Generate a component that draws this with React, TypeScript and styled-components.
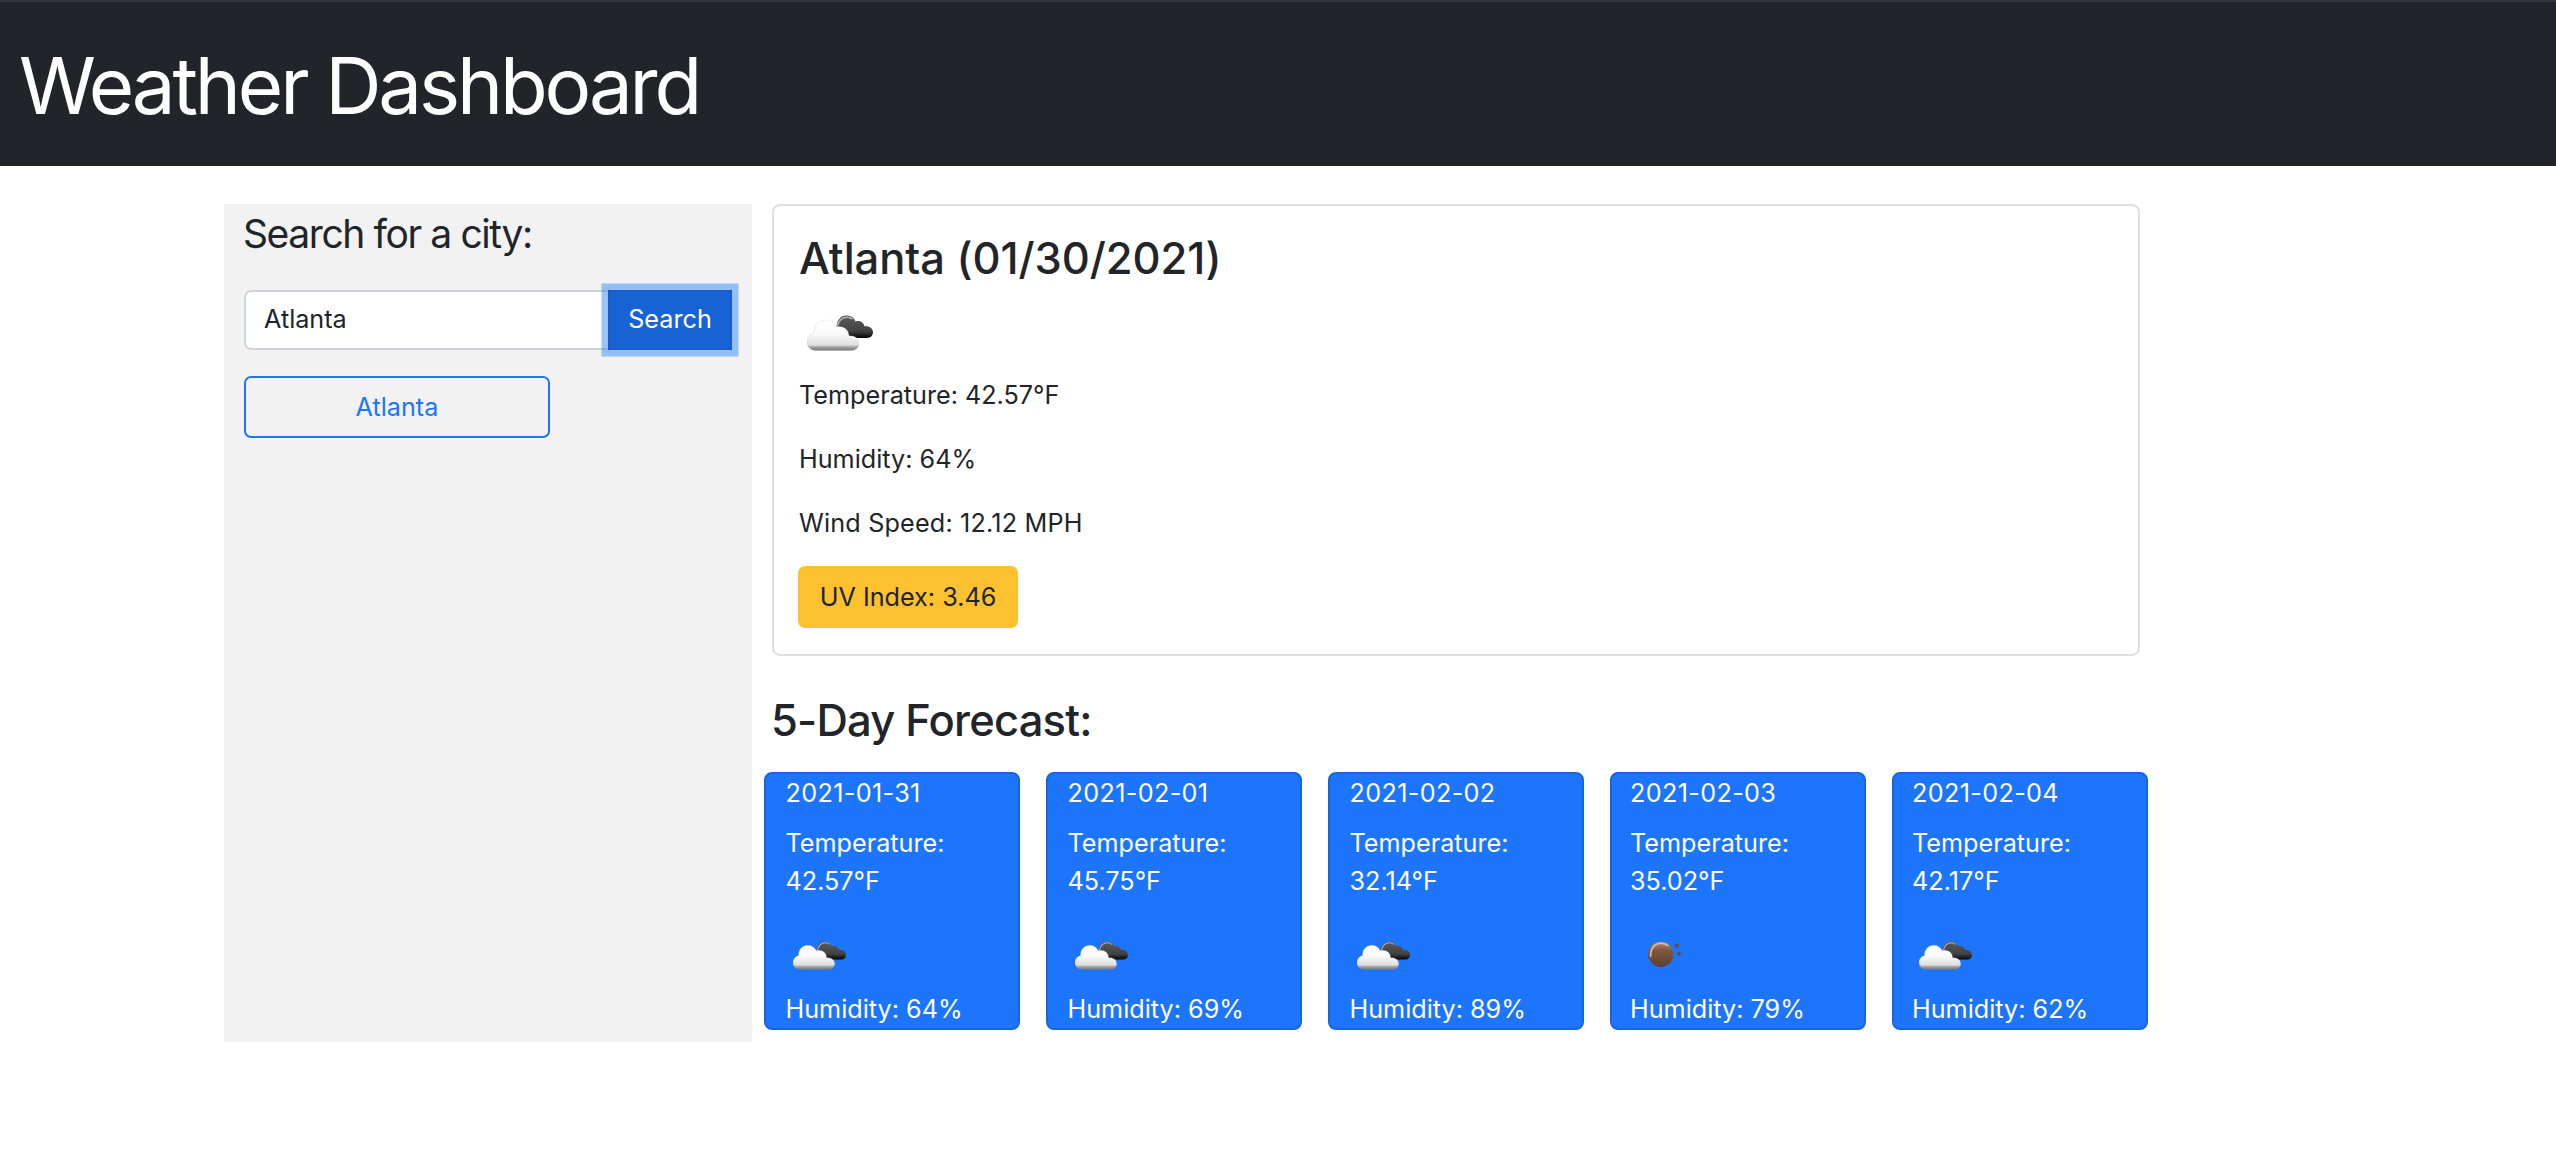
import React from "react";
import styled, { createGlobalStyle } from "styled-components";

const GlobalStyle = createGlobalStyle`
  *, *::before, *::after { box-sizing: border-box; }
  body {
    margin: 0;
    background: #fff;
    color: #212529;
    font-family: Inter, "Liberation Sans", sans-serif;
    font-size: 25.2px;
    line-height: 38px;
  }
`;

const Header = styled.header`
  height: 166px;
  padding: 36px 19px 0;
  background: #212429;
  border-top: 2px solid #33363c;
`;

const PageTitle = styled.h1`
  margin: 0;
  color: #fff;
  font-size: 78px;
  line-height: 96px;
  font-weight: 430;
  letter-spacing: -3.15px;
`;

const Main = styled.main`
  display: flex;
  align-items: flex-start;
  gap: 20px;
  padding: 38px 0 0 224px;
`;

const Sidebar = styled.aside`
  width: 528px;
  height: 838px;
  padding: 6px 20px 0;
  background: #f2f2f2;
`;

const SearchLabel = styled.h4`
  margin: 0 0 32px -1px;
  font-size: 39px;
  line-height: 48px;
  font-weight: 430;
  letter-spacing: -1.4px;
`;

const SearchForm = styled.form`
  display: flex;
  margin: 0 0 26px;
`;

const CityInput = styled.input`
  width: 364px;
  height: 60px;
  padding: 0 18px 2px;
  border: 2px solid #ced4da;
  border-right: 0;
  border-radius: 7px 0 0 7px;
  outline: none;
  background: #fff;
  color: #212529;
  font: inherit;
`;

const SearchButton = styled.button`
  width: 124px;
  height: 60px;
  padding: 0 0 2px;
  border: 2px solid #175cc9;
  background: #1763d6;
  box-shadow: 0 0 0 6.5px rgba(54, 138, 250, 0.5);
  color: #fff;
  font: inherit;
  font-weight: 430;
`;

const HistoryButton = styled.button`
  display: block;
  width: 306px;
  height: 62px;
  padding: 0;
  border: 2px solid #1c75fb;
  border-radius: 7px;
  background: transparent;
  color: #1c75fb;
  font: inherit;
`;

const Content = styled.section`
  width: 1368px;
`;

const CurrentCard = styled.article`
  height: 452px;
  padding: 25px 25px 26px;
  border: 2px solid #dfdfdf;
  border-radius: 8px;
`;

const Heading = styled.h3`
  margin: 0;
  font-size: 43.5px;
  line-height: 54px;
  font-weight: 520;
  letter-spacing: -0.05px;
`;

const CurrentIcon = styled.div`
  height: 91px;
  padding: 30px 0 0 8px;
  line-height: 0;
`;

const Reading = styled.p<{ $tracking?: number }>`
  margin: 0 0 26px;
  letter-spacing: ${(p) => p.$tracking ?? 0}px;
`;

const UvButton = styled.button`
  display: block;
  width: 220px;
  height: 62px;
  margin: -2px 0 0 -1px;
  padding: 0;
  border: 0;
  border-radius: 7px;
  background: #fdc02f;
  color: #212529;
  font: inherit;
`;

const ForecastHeading = styled(Heading)`
  margin: 37px 0 25px -1px;
  letter-spacing: -0.8px;
`;

const ForecastRow = styled.div`
  display: flex;
  gap: 26px;
  margin: 0 -8px;
`;

const DayCard = styled.article`
  flex: 0 0 256px;
  height: 258px;
  padding: 0 0 0 19.5px;
  border: 2px solid #1966da;
  border-radius: 8px;
  background: #1c75fb;
  color: #fff;
  font-weight: 430;

  &:nth-child(n + 4) {
    padding-left: 18px;
  }
`;

const DayDate = styled.div`
  margin-bottom: 12px;
  letter-spacing: 0.35px;
`;

const DayTemperature = styled.div`
  width: 170px;
`;

const DayIcon = styled.div<{ $inset: number }>`
  height: 90px;
  padding: 41px 0 0 ${(p) => p.$inset}px;
  line-height: 0;
`;

const CloudIcon = ({ width, id }: { width: number; id: string }) => (
  <svg width={width} height={(width * 36) / 66} viewBox="0 0 66 36" aria-hidden="true">
    <defs>
      <linearGradient id={`${id}-front`} gradientUnits="userSpaceOnUse" x1="0" y1="5" x2="0" y2="35.5">
        <stop offset="0" stopColor="#fff" />
        <stop offset="0.45" stopColor="#fafafa" />
        <stop offset="0.82" stopColor="#dedede" />
        <stop offset="0.88" stopColor="#a6a6a6" />
        <stop offset="1" stopColor="#777" />
      </linearGradient>
      <linearGradient id={`${id}-rear`} gradientUnits="userSpaceOnUse" x1="0" y1="0" x2="0" y2="23">
        <stop offset="0" stopColor="#5c5c5c" />
        <stop offset="0.7" stopColor="#424242" />
        <stop offset="1" stopColor="#050505" />
      </linearGradient>
    </defs>
    <path
      d="M29.5 12C30 5 33.5.5 39.5.5c4.500 0 7.500 2.200 9 6 3.800-1.300 8 .4 9 4.800 5-.6 8.500 2.200 8.500 6 0 3.500-2.500 5.700-6 5.700H42z"
      fill={`url(#${id}-rear)`}
    />
    <path d="M30.500 11C32 5.500 35 2.200 40 2.200c2 0 4 .6 5.500 2" fill="none" stroke="#b5b5b5" strokeWidth="1.500" />
    <path
      d="M8.500 35.500C3.500 35.500 0 31.500 0 26.800c0-4.200 2.800-7.600 6.800-8.600C6.500 10.500 11.500 5.200 18.500 5.200c4.700 0 8.300 2.400 10.300 6.500 7.500-1.500 13 2.500 13.200 9.100 5.800-.6 10 2.700 10 7.400 0 4.300-3.300 7.300-7.500 7.300z"
      fill={`url(#${id}-front)`}
      stroke="#8e8e8e"
      strokeOpacity="0.22"
      strokeWidth="0.700"
    />
  </svg>
);

const SunIcon = () => (
  <svg width="34" height="28" viewBox="0 0 34 28" aria-hidden="true">
    <defs>
      <linearGradient id="sun-disc" x1="0" y1="0" x2="0" y2="1">
        <stop offset="0" stopColor="#b98a6c" />
        <stop offset="0.35" stopColor="#80583f" />
        <stop offset="1" stopColor="#5c402d" />
      </linearGradient>
    </defs>
    <circle cx="12.800" cy="13.300" r="12.600" fill="url(#sun-disc)" />
    <path d="M2.700 16C1.800 8 6.500 2.500 13 2.200c3.500 0 5.800 1.200 7.500 2.800" fill="none" stroke="#e0bda6" strokeWidth="1.600" />
    <circle cx="28.800" cy="4.800" r="2.300" fill="#654c4c" />
    <circle cx="30.800" cy="12.600" r="2" fill="#654c4c" />
  </svg>
);

const days = [
  { date: "2021-01-31", temperature: "42.57", humidity: 64, sky: "cloud" },
  { date: "2021-02-01", temperature: "45.75", humidity: 69, sky: "cloud" },
  { date: "2021-02-02", temperature: "32.14", humidity: 89, sky: "cloud" },
  { date: "2021-02-03", temperature: "35.02", humidity: 79, sky: "sun" },
  { date: "2021-02-04", temperature: "42.17", humidity: 62, sky: "cloud" },
];

export default function App() {
  return (
    <>
      <GlobalStyle />
      <Header>
        <PageTitle>Weather Dashboard</PageTitle>
      </Header>
      <Main>
        <Sidebar>
          <SearchLabel>Search for a city:</SearchLabel>
          <SearchForm>
            <CityInput defaultValue="Atlanta" />
            <SearchButton type="button">Search</SearchButton>
          </SearchForm>
          <HistoryButton type="button">Atlanta</HistoryButton>
        </Sidebar>
        <Content>
          <CurrentCard>
            <Heading>Atlanta (01/30/2021)</Heading>
            <CurrentIcon>
              <CloudIcon width={66} id="current" />
            </CurrentIcon>
            <Reading>Temperature: 42.57°F</Reading>
            <Reading>Humidity: 64%</Reading>
            <Reading $tracking={0.17}>Wind Speed: 12.12 MPH</Reading>
            <UvButton type="button">UV Index: 3.46</UvButton>
          </CurrentCard>
          <ForecastHeading>5-Day Forecast:</ForecastHeading>
          <ForecastRow>
            {days.map((day) => (
              <DayCard key={day.date}>
                <DayDate>{day.date}</DayDate>
                <DayTemperature>Temperature: {day.temperature}°F</DayTemperature>
                <DayIcon $inset={day.sky === "sun" ? 18 : 7}>
                  {day.sky === "sun" ? <SunIcon /> : <CloudIcon width={53} id={`day-${day.date}`} />}
                </DayIcon>
                <div>Humidity: {day.humidity}%</div>
              </DayCard>
            ))}
          </ForecastRow>
        </Content>
      </Main>
    </>
  );
}
